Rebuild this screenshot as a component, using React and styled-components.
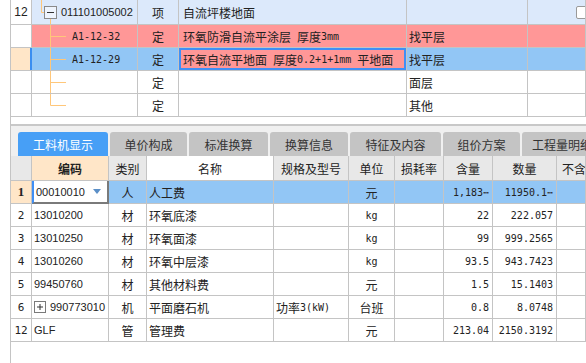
import React from 'react';
import styled, { createGlobalStyle } from 'styled-components';

const GlobalStyle = createGlobalStyle`
  html, body {
    margin: 0;
    padding: 0;
    background: #fff;
  }
  body {
    font-family: "Noto Sans CJK SC", sans-serif;
    font-size: 12px;
    color: #222;
  }
  * { box-sizing: border-box; }
`;

const ZH = '"Noto Sans CJK SC", sans-serif';
const SANS = '"Liberation Sans", "Noto Sans CJK SC", sans-serif';
const MONO = '"DejaVu Sans Mono", "Noto Sans CJK SC", monospace';

const GRID = '#c4c4c4';
const PINK = '#ff9797';
const BLUE = '#92c6f5';
const PALE = '#dce9fb';
const PEACH = '#ffe6c8';
const LINE = '#ffc77a';

const topCols = [21, 106, 41, 228, 121];
const matCols = [21, 77, 38, 127, 75, 46, 49, 49, 64];

const topRows = [
  { no: '12', h: 24, bg: PALE, code: '011101005002', kind: '项', name: '自流坪楼地面', part: '', root: true, check: true },
  { bg: PINK, code: 'A1-12-32', kind: '定', name: '环氧防滑自流平涂层 厚度3mm', part: '找平层' },
  { bg: BLUE, code: 'A1-12-29', kind: '定', name: '环氧自流平地面 厚度0.2+1+1mm 平地面', part: '找平层', current: true },
  { kind: '定', part: '面层' },
  { kind: '定', part: '其他', last: true },
];

const tabs = [
  { label: '工料机显示', w: 90, active: true },
  { label: '单价构成', w: 77 },
  { label: '标准换算', w: 79 },
  { label: '换算信息', w: 78 },
  { label: '特征及内容', w: 91 },
  { label: '组价方案', w: 77 },
  { label: '工程量明细', w: 80 },
];

const heads = ['', '编码', '类别', '名称', '规格及型号', '单位', '损耗率', '含量', '数量', '不含税市场价'];

const mats = [
  { no: '1', code: '00010010', kind: '人', name: '人工费', spec: '', unit: '元', qty: '1,183⋯', amt: '11950.1⋯', sel: true },
  { no: '2', code: '13010200', kind: '材', name: '环氧底漆', spec: '', unit: 'kg', qty: '22', amt: '222.057' },
  { no: '3', code: '13010250', kind: '材', name: '环氧面漆', spec: '', unit: 'kg', qty: '99', amt: '999.2565' },
  { no: '4', code: '13010260', kind: '材', name: '环氧中层漆', spec: '', unit: 'kg', qty: '93.5', amt: '943.7423' },
  { no: '5', code: '99450760', kind: '材', name: '其他材料费', spec: '', unit: '元', qty: '1.5', amt: '15.1403' },
  { no: '6', code: '990773010', kind: '机', name: '平面磨石机', spec: '功率3(kW)', unit: '台班', qty: '0.8', amt: '8.0748', group: true },
  { no: '12', code: 'GLF', kind: '管', name: '管理费', spec: '', unit: '元', qty: '213.04', amt: '2150.3192' },
];

// ascii runs (spaces included) in the narrow mono face, the rest in the CJK face
const Mixed = ({ text }) =>
  text.split(/([\x20-\x7e]+)/).map((part, i) =>
    /^[\x20-\x7e]+$/.test(part) ? <Mono key={i}>{part}</Mono> : <span key={i}>{part}</span>
  );

const RootLines = () => (
  <svg width="29" height="24" viewBox="0 0 29 24">
    <path d="M9.5 0V12.5H12" stroke={LINE} fill="none" />
    <path d="M18.5 19V24" stroke={LINE} fill="none" />
    <rect x="12.5" y="6.5" width="12" height="12" fill="#eef4fd" stroke="#8a8a8a" />
    <path d="M15 12.5H22" stroke="#333" />
  </svg>
);

const ChildLines = ({ last }) => (
  <svg width="40" height="22" viewBox="0 0 40 22">
    <path d={last ? 'M18.5 0V11.5H34' : 'M18.5 0V22M18.5 11.5H34'} stroke={LINE} fill="none" />
  </svg>
);

const PlusBox = () => (
  <svg width="12" height="12" viewBox="0 0 12 12">
    <rect x="0.5" y="0.5" width="11" height="11" fill="#fff" stroke="#7a7a7a" />
    <path d="M3 6H9M6 3V9" stroke="#333" />
  </svg>
);

const DropArrow = () => (
  <svg width="8" height="5" viewBox="0 0 8 5">
    <path d="M0 0H8L4 5Z" fill="#5b8fc7" />
  </svg>
);

const App = () => (
  <>
    <GlobalStyle />
    <Page>
      <TopGrid>
        {topRows.map((r, i) => (
          <TopRow key={i} $h={r.h || 22}>
            <TopCell $w={topCols[0]} $align="center" $bg={r.current ? PEACH : '#fff'} $mark={r.current}>
              <RowNo>{r.no}</RowNo>
            </TopCell>
            <TopCell $w={topCols[1]} $bg={r.bg}>
              {r.root ? <RootLines /> : <ChildLines last={r.last} />}
              {r.root ? <Code>{r.code}</Code> : <Mono>{r.code}</Mono>}
            </TopCell>
            <TopCell $w={topCols[2]} $align="center" $bg={r.bg}>{r.kind}</TopCell>
            <TopCell $w={topCols[3]} $bg={r.current ? PINK : r.bg} $focus={r.current} $pad={4}>
              {r.name && <Mixed text={r.name} />}
            </TopCell>
            <TopCell $w={topCols[4]} $bg={r.bg} $pad={2}>{r.part}</TopCell>
            <TopCell $bg={r.bg} $fill>
              {r.check && <Check />}
            </TopCell>
          </TopRow>
        ))}
      </TopGrid>

      <Gap />

      <TabStrip>
        {tabs.map(t => (
          <Tab key={t.label} $w={t.w} $active={t.active}>{t.label}</Tab>
        ))}
      </TabStrip>

      <HeadRow>
        {heads.map((h, i) => (
          <HeadCell
            key={i}
            $w={matCols[i]}
            $fill={i === heads.length - 1}
            $bg={i === 1 ? PEACH : i === 3 ? '#fff' : '#e8e8e8'}
            $bold={i === 1}
          >
            {h}
          </HeadCell>
        ))}
      </HeadRow>

      {mats.map(m => (
        <MatRow key={m.no}>
          <MatCell $w={matCols[0]} $align="center" $bg={m.sel ? PEACH : '#fff'}>
            {m.sel ? <FirstNo>{m.no}</FirstNo> : <MatNo>{m.no}</MatNo>}
          </MatCell>
          {m.sel ? (
            <Editor $w={matCols[1]}>
              <Code>{m.code}</Code>
              <DropArrow />
            </Editor>
          ) : (
            <MatCell $w={matCols[1]} $pad={2}>
              {m.group && <Expand><PlusBox /></Expand>}
              <Code>{m.code}</Code>
            </MatCell>
          )}
          <MatCell $w={matCols[2]} $align="center" $bg={m.sel && BLUE}>{m.kind}</MatCell>
          <MatCell $w={matCols[3]} $pad={2} $bg={m.sel && BLUE}>{m.name}</MatCell>
          <MatCell $w={matCols[4]} $pad={2} $bg={m.sel && BLUE}>
            {m.spec && <Mixed text={m.spec} />}
          </MatCell>
          <MatCell $w={matCols[5]} $align="center" $bg={m.sel && BLUE}>
            <Mixed text={m.unit} />
          </MatCell>
          <MatCell $w={matCols[6]} $bg={m.sel && BLUE} />
          <MatCell $w={matCols[7]} $align="flex-end" $pad={3} $bg={m.sel && BLUE}>
            <Mono>{m.qty}</Mono>
          </MatCell>
          <MatCell $w={matCols[8]} $align="flex-end" $pad={3} $bg={m.sel && BLUE}>
            <Mono>{m.amt}</Mono>
          </MatCell>
          <MatCell $fill $bg={m.sel && BLUE} />
        </MatRow>
      ))}
    </Page>
  </>
);

const Page = styled.div`
  width: 576px;
  height: 363px;
  margin-left: 10px;
  border-left: 1px solid ${GRID};
  display: flex;
  flex-direction: column;
  overflow: hidden;
  background: #fff;
`;

const TopGrid = styled.div`
  display: flex;
  flex-direction: column;
`;

const TopRow = styled.div`
  display: flex;
  height: ${p => p.$h + 1}px;
  border-bottom: 1px solid ${GRID};
  flex-shrink: 0;
`;

const TopCell = styled.div`
  position: relative;
  display: flex;
  align-items: center;
  justify-content: ${p => p.$align || 'flex-start'};
  width: ${p => (p.$fill ? 'auto' : `${p.$w}px`)};
  flex: ${p => (p.$fill ? '1' : 'none')};
  padding-left: ${p => p.$pad || 0}px;
  background: ${p => p.$bg || '#fff'};
  border-right: 1px solid ${p => (p.$mark ? '#3b8ef0' : GRID)};
  box-shadow: ${p =>
    p.$focus ? 'inset 0 0 0 2px #3f8ff5' : p.$mark ? 'inset -1px 0 0 #3b8ef0' : 'none'};
  font-family: ${ZH};
  font-size: 12px;
  white-space: pre;
  overflow: hidden;
`;

const RowNo = styled.span`
  font-family: ${SANS};
  font-size: 12px;
`;

const Code = styled.span`
  font-family: ${SANS};
  font-size: 11px;
  color: #222;
`;

const Mono = styled.span`
  font-family: ${MONO};
  font-size: 10px;
  color: #222;
  white-space: pre;
`;

const Check = styled.span`
  position: absolute;
  top: 6px;
  left: 48px;
  width: 13px;
  height: 13px;
  border: 1px solid #9a9a9a;
  border-radius: 2px;
  background: #fff;
`;

const Gap = styled.div`
  height: 7px;
  flex-shrink: 0;
  background: #fff;
`;

const TabStrip = styled.div`
  display: flex;
  gap: 2px;
  height: 32px;
  flex-shrink: 0;
  padding: 6px 0 0 7px;
  border-top: 2px solid #c8c8c8;
  background: #f0f0f0;
  overflow: hidden;
`;

const Tab = styled.div`
  display: flex;
  align-items: center;
  justify-content: center;
  width: ${p => p.$w}px;
  flex-shrink: 0;
  height: 24px;
  border-radius: 3px 3px 0 0;
  background: ${p => (p.$active ? '#479ff6' : '#c4c4c4')};
  color: ${p => (p.$active ? '#fff' : '#333')};
  font-family: ${ZH};
  font-size: 12px;
  white-space: nowrap;
  overflow: hidden;
`;

const HeadRow = styled.div`
  display: flex;
  height: 25px;
  flex-shrink: 0;
  border-bottom: 1px solid ${GRID};
`;

const HeadCell = styled.div`
  display: flex;
  align-items: center;
  justify-content: ${p => (p.$fill ? 'flex-start' : 'center')};
  padding-left: ${p => (p.$fill ? 5 : 0)}px;
  width: ${p => (p.$fill ? 'auto' : `${p.$w}px`)};
  flex: ${p => (p.$fill ? '1' : 'none')};
  background: ${p => p.$bg};
  border-right: 1px solid ${GRID};
  font-family: ${ZH};
  font-size: 12px;
  font-weight: ${p => (p.$bold ? 700 : 400)};
  color: #222;
  white-space: nowrap;
  overflow: hidden;
`;

const MatRow = styled.div`
  display: flex;
  height: 23px;
  flex-shrink: 0;
  border-bottom: 1px solid ${GRID};
`;

const MatCell = styled.div`
  display: flex;
  align-items: center;
  justify-content: ${p => p.$align || 'flex-start'};
  width: ${p => (p.$fill ? 'auto' : `${p.$w}px`)};
  flex: ${p => (p.$fill ? '1' : 'none')};
  padding: 0 ${p => (p.$align === 'flex-end' ? p.$pad || 0 : 0)}px 0
    ${p => (p.$align === 'flex-end' ? 0 : p.$pad || 0)}px;
  background: ${p => p.$bg || '#fff'};
  border-right: 1px solid ${GRID};
  font-family: ${ZH};
  font-size: 12px;
  white-space: nowrap;
  overflow: hidden;
`;

const MatNo = styled.span`
  font-family: ${MONO};
  font-size: 11px;
`;

const FirstNo = styled.span`
  font-family: "Liberation Serif", serif;
  font-size: 13px;
  font-weight: 700;
`;

const Editor = styled.div`
  display: flex;
  align-items: center;
  justify-content: space-between;
  width: ${p => p.$w}px;
  flex: none;
  height: 23px;
  margin-bottom: -1px;
  padding: 0 6px 0 2px;
  background: #fff;
  border-left: 2px solid #3f8ff5;
  border-right: 2px solid #7a7a7a;
  border-bottom: 2px solid #7a7a7a;
`;

const Expand = styled.span`
  display: flex;
  margin: 0 4px 0 0;
`;

export default App;
